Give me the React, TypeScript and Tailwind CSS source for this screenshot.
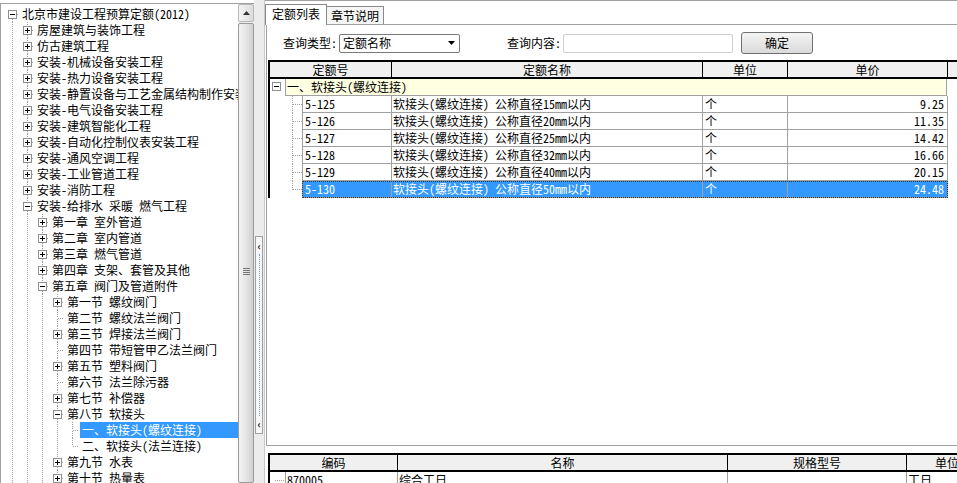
import React from 'react';

type TNode = { l: number; t: string; e?: '+' | '-'; s?: boolean };

const tree: TNode[] = [
  { l: 0, t: '北京市建设工程预算定额(2012)', e: '-' },
  { l: 1, t: '房屋建筑与装饰工程', e: '+' },
  { l: 1, t: '仿古建筑工程', e: '+' },
  { l: 1, t: '安装-机械设备安装工程', e: '+' },
  { l: 1, t: '安装-热力设备安装工程', e: '+' },
  { l: 1, t: '安装-静置设备与工艺金属结构制作安装工程', e: '+' },
  { l: 1, t: '安装-电气设备安装工程', e: '+' },
  { l: 1, t: '安装-建筑智能化工程', e: '+' },
  { l: 1, t: '安装-自动化控制仪表安装工程', e: '+' },
  { l: 1, t: '安装-通风空调工程', e: '+' },
  { l: 1, t: '安装-工业管道工程', e: '+' },
  { l: 1, t: '安装-消防工程', e: '+' },
  { l: 1, t: '安装-给排水 采暖 燃气工程', e: '-' },
  { l: 2, t: '第一章 室外管道', e: '+' },
  { l: 2, t: '第二章 室内管道', e: '+' },
  { l: 2, t: '第三章 燃气管道', e: '+' },
  { l: 2, t: '第四章 支架、套管及其他', e: '+' },
  { l: 2, t: '第五章 阀门及管道附件', e: '-' },
  { l: 3, t: '第一节 螺纹阀门', e: '+' },
  { l: 3, t: '第二节 螺纹法兰阀门' },
  { l: 3, t: '第三节 焊接法兰阀门', e: '+' },
  { l: 3, t: '第四节 带短管甲乙法兰阀门' },
  { l: 3, t: '第五节 塑料阀门', e: '+' },
  { l: 3, t: '第六节 法兰除污器' },
  { l: 3, t: '第七节 补偿器', e: '+' },
  { l: 3, t: '第八节 软接头', e: '-' },
  { l: 4, t: '一、软接头(螺纹连接)', s: true },
  { l: 4, t: '二、软接头(法兰连接)' },
  { l: 3, t: '第九节 水表', e: '+' },
  { l: 3, t: '第十节 热量表', e: '+' },
];

function cont(i: number, k: number) {
  for (let j = i + 1; j < tree.length; j++) {
    if (tree[j].l < k) return false;
    if (tree[j].l === k) return true;
  }
  return true;
}

const DOT = { stroke: '#a0a0a0', strokeWidth: 1, strokeDasharray: '1 1', shapeRendering: 'crispEdges' as const };

function Box({ x, y, sign }: { x: number; y: number; sign: '+' | '-' }) {
  return (
    <g shapeRendering="crispEdges">
      <rect x={x + 0.5} y={y + 0.5} width={8} height={8} fill="#fff" stroke="#8e8f8f" />
      <line x1={x + 2} y1={y + 4.5} x2={x + 7} y2={y + 4.5} stroke="#000" />
      {sign === '+' && <line x1={x + 4.5} y1={y + 2} x2={x + 4.5} y2={y + 7} stroke="#000" />}
    </g>
  );
}

function TreeCell({ v, top, bot, h, box }: { v?: boolean; top?: boolean; bot?: boolean; h?: boolean; box?: '+' | '-' }) {
  return (
    <svg width="15" height="16" className="shrink-0 block">
      {v && <line x1="8.5" y1="0" x2="8.5" y2="16" {...DOT} />}
      {top && <line x1="8.5" y1="0" x2="8.5" y2="8" {...DOT} />}
      {bot && <line x1="8.5" y1="9" x2="8.5" y2="16" {...DOT} />}
      {h && <line x1="9" y1="8.5" x2="15" y2="8.5" {...DOT} />}
      {box && <Box x={4} y={4} sign={box} />}
    </svg>
  );
}

function TreeRow({ n, i }: { n: TNode; i: number }) {
  const cells = [];
  for (let k = 0; k < n.l; k++) {
    cells.push(<TreeCell key={k} v={cont(i, k)} />);
  }
  cells.push(<TreeCell key="own" top={i > 0} bot={cont(i, n.l)} h box={n.e} />);
  return (
    <div className="flex h-[16px] pl-[3px] whitespace-nowrap">
      {cells}
      <div
        className={
          n.s
            ? 'ml-[1px] pl-[2px] flex-1 bg-[#3399ff] text-white h-[16px] leading-[16px]'
            : 'ml-[1px] pl-[2px] h-[16px] leading-[16px]'
        }
      >
        {n.t}
      </div>
    </div>
  );
}

function LeftPanel() {
  return (
    <div className="w-[254px] shrink-0 h-full pt-[3px] bg-white">
      <div className="h-full border-l border-t border-[#a0a0a0] flex">
        <div className="flex-1 min-w-0 overflow-hidden pt-[2px]">
          {tree.map((n, i) => (
            <TreeRow key={i} n={n} i={i} />
          ))}
        </div>
        <div className="w-[16px] shrink-0 flex flex-col bg-[#ececec]">
          <div className="h-[18px] border border-[#b8b8b8] rounded-[2px] bg-gradient-to-r from-[#f4f4f4] to-[#dcdcdc] flex items-center justify-center">
            <svg width="7" height="4">
              <path d="M0 4 L3.5 0 L7 4 Z" fill="#333" />
            </svg>
          </div>
          <div className="mt-[1px] flex-1 border border-[#9a9a9a] rounded-[2px] bg-gradient-to-r from-[#f3f3f3] via-[#e6e6e6] to-[#cfcfcf] pt-[244px] flex flex-col items-center">
            <div className="w-[7px] h-[7px] flex flex-col justify-between">
              <div className="h-[1px] bg-[#777]" />
              <div className="h-[1px] bg-[#777]" />
              <div className="h-[1px] bg-[#777]" />
              <div className="h-[1px] bg-[#777]" />
            </div>
          </div>
        </div>
      </div>
    </div>
  );
}

function Splitter() {
  return (
    <div className="w-[11px] shrink-0 h-full bg-[#ececec] border-r border-[#c8c8c8] pt-[236px]">
      <div className="ml-[1px] w-[8px] h-[198px] border border-[#a0a0a0] bg-[#f7f7f7] flex flex-col items-center py-[4px]">
        <span className="text-[10px] leading-[10px] font-bold">‹</span>
        <div className="flex-1 my-[3px] border-l border-dotted border-[#6a9ad0]" />
        <span className="text-[10px] leading-[10px] font-bold">‹</span>
      </div>
    </div>
  );
}

const codes = [
  ['5-125', '15', '9.25'],
  ['5-126', '20', '11.35'],
  ['5-127', '25', '14.42'],
  ['5-128', '32', '16.66'],
  ['5-129', '40', '20.15'],
  ['5-130', '50', '24.48'],
];

function MainGrid() {
  return (
    <div className="ml-[1px] mt-[6px] border-t-2 border-l-2 border-black">
      <div className="flex h-[17px] bg-[#f0f0f0] border-b-2 border-black leading-[15px] whitespace-nowrap">
        <div className="w-[122px] shrink-0 border-r border-black text-center">定额号</div>
        <div className="w-[311px] shrink-0 border-r border-black text-center">定额名称</div>
        <div className="w-[85px] shrink-0 border-r border-black text-center">单位</div>
        <div className="w-[160px] shrink-0 border-r border-black text-center">单价</div>
        <div className="flex-1" />
      </div>
      <div className="flex h-[17px]">
        <svg width="15" height="17" className="shrink-0 block">
          <Box x={2} y={3} sign="-" />
        </svg>
        <div className="w-[662px] shrink-0 bg-[#ffffe1] border-l border-r border-b border-[#a0a0a0] leading-[16px] whitespace-nowrap pl-[1px]">
          一、软接头(螺纹连接)
        </div>
      </div>
      {codes.map((c, i) => {
        const sel = i === codes.length - 1;
        const cell = 'shrink-0 border-r border-b border-[#a0a0a0] h-[17px] leading-[16px] whitespace-nowrap';
        return (
          <div key={c[0]} className="flex h-[17px]">
            <svg width="32" height="17" className="shrink-0 block">
              <line x1="22.5" y1="0" x2="22.5" y2={sel ? 9 : 17} {...DOT} />
              <line x1="23" y1="8.5" x2="32" y2="8.5" {...DOT} />
            </svg>
            <div className={`flex ${sel ? 'bg-[#3399ff] text-white outline outline-1 outline-dotted outline-[#333] -outline-offset-1' : ''}`}>
              <div className={`${cell} border-l w-[90px] pl-[2px]`}>{c[0]}</div>
              <div className={`${cell} w-[311px] pl-[1px]`}>软接头(螺纹连接) 公称直径{c[1]}mm以内</div>
              <div className={`${cell} w-[85px] pl-[2px]`}>个</div>
              <div className={`${cell} w-[160px] pr-[3px] text-right`}>{c[2]}</div>
            </div>
          </div>
        );
      })}
    </div>
  );
}

function BottomGrid() {
  const cell = 'shrink-0 border-r border-[#a0a0a0] h-[16px] leading-[16px] whitespace-nowrap';
  return (
    <div className="ml-[3px] mt-[7px] border-t-2 border-l-2 border-black">
      <div className="flex h-[17px] bg-[#f0f0f0] border-b-2 border-black leading-[15px] whitespace-nowrap">
        <div className="w-[128px] shrink-0 border-r border-black text-center">编码</div>
        <div className="w-[330px] shrink-0 border-r border-black text-center">名称</div>
        <div className="w-[179px] shrink-0 border-r border-black text-center">规格型号</div>
        <div className="w-[80px] shrink-0 text-center">单位</div>
      </div>
      <div className="flex h-[16px]">
        <svg width="15" height="16" className="shrink-0 block">
          <line x1="5" y1="8.5" x2="15" y2="8.5" {...DOT} />
        </svg>
        <div className={`${cell} border-l w-[113px] pl-[1px]`}>870005</div>
        <div className={`${cell} w-[330px] pl-[1px]`}>综合工日</div>
        <div className={`${cell} w-[179px] pl-[1px]`}>&nbsp;</div>
        <div className={`${cell} w-[80px] pl-[1px]`}>工日</div>
      </div>
    </div>
  );
}

function RightPanel() {
  return (
    <div className="flex-1 min-w-0 h-full bg-white border-t border-[#a0a0a0] flex flex-col overflow-hidden">
      <div className="h-[23px] shrink-0 flex items-end">
        <div className="relative z-10 -mb-[1px] h-[21px] w-[62px] bg-white border-l border-t border-r border-[#8a8a8a] flex items-center justify-center pb-[2px]">
          定额列表
        </div>
        <div className="h-[18px] w-[57px] bg-[#f6f6f6] border-t border-r border-[#8a8a8a] flex items-center justify-center">
          章节说明
        </div>
      </div>
      <div className="h-[422px] shrink-0 border-t border-l border-b border-[#a0a0a0] ml-[1px]">
        <div className="mt-[7px] h-[22px] flex items-center pl-[16px] whitespace-nowrap">
          <span className="w-[55px] shrink-0">查询类型:</span>
          <div className="ml-[1px] w-[121px] h-[19px] border border-[#7a7a7a] rounded-[2px] bg-white flex items-center pl-[3px] pr-[4px] justify-between">
            <span>定额名称</span>
            <svg width="7" height="4">
              <path d="M0 0 L7 0 L3.5 4 Z" fill="#000" />
            </svg>
          </div>
          <span className="ml-[47px] w-[55px] shrink-0">查询内容:</span>
          <div className="ml-[1px] w-[170px] h-[19px] border border-[#cfcfcf] rounded-[2px] bg-white" />
          <div className="ml-[8px] w-[72px] h-[22px] border border-[#707070] rounded-[3px] bg-gradient-to-b from-[#f4f4f4] to-[#dadada] flex items-center justify-center">
            确定
          </div>
        </div>
        <MainGrid />
      </div>
      <BottomGrid />
    </div>
  );
}

export default function App() {
  return (
    <div className="w-[957px] h-[483px] overflow-hidden flex bg-[#ececec] text-[12px] leading-[16px] text-black font-['Noto_Sans_Mono_CJK_SC','Noto_Sans_CJK_SC','Liberation_Sans',sans-serif]">
      <LeftPanel />
      <Splitter />
      <RightPanel />
    </div>
  );
}
